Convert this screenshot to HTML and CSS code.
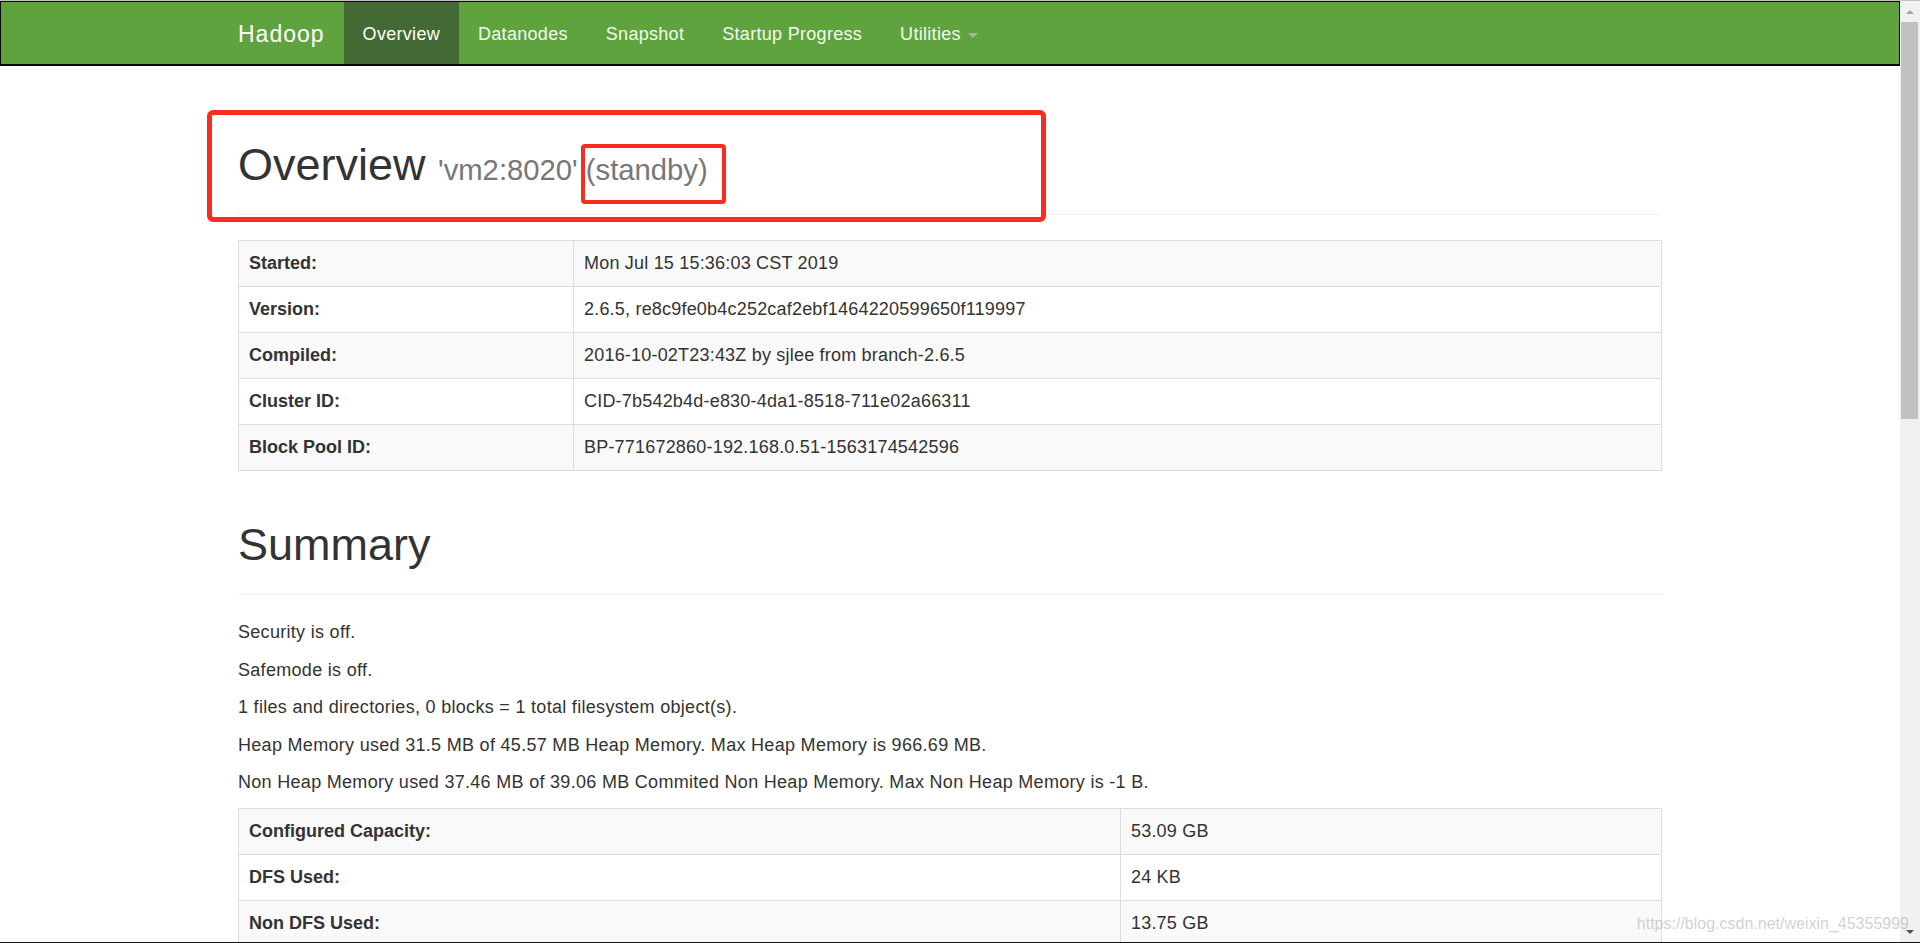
FILE: index.html
```html
<!DOCTYPE html>
<html lang="en">
<head>
<meta charset="utf-8">
<title>Namenode information</title>
<link rel="stylesheet" href="styles.css">
</head>
<body>
<div class="topline"></div>
<div class="window">
  <div class="page">
    <header class="navbar">
      <div class="container nav-inner">
        <a class="brand">Hadoop</a>
        <ul class="nav">
          <li class="active"><a>Overview</a></li>
          <li><a>Datanodes</a></li>
          <li><a>Snapshot</a></li>
          <li><a>Startup Progress</a></li>
          <li><a>Utilities <span class="caret"></span></a></li>
        </ul>
      </div>
    </header>

    <div class="container main">
      <div class="page-header">
        <h1>Overview <small>'vm2:8020' (standby)</small></h1>
      </div>

      <table class="table info">
        <colgroup><col class="key"><col></colgroup>
        <tr><th>Started:</th><td>Mon Jul 15 15:36:03 CST 2019</td></tr>
        <tr><th>Version:</th><td>2.6.5, re8c9fe0b4c252caf2ebf1464220599650f119997</td></tr>
        <tr><th>Compiled:</th><td>2016-10-02T23:43Z by sjlee from branch-2.6.5</td></tr>
        <tr><th>Cluster ID:</th><td>CID-7b542b4d-e830-4da1-8518-711e02a66311</td></tr>
        <tr><th>Block Pool ID:</th><td>BP-771672860-192.168.0.51-1563174542596</td></tr>
      </table>

      <div class="page-header">
        <h1>Summary</h1>
      </div>

      <p>Security is off.</p>
      <p>Safemode is off.</p>
      <p>1 files and directories, 0 blocks = 1 total filesystem object(s).</p>
      <p>Heap Memory used 31.5 MB of 45.57 MB Heap Memory. Max Heap Memory is 966.69 MB.</p>
      <p>Non Heap Memory used 37.46 MB of 39.06 MB Commited Non Heap Memory. Max Non Heap Memory is -1 B.</p>

      <table class="table capacity">
        <colgroup><col class="key"><col></colgroup>
        <tr><th>Configured Capacity:</th><td>53.09 GB</td></tr>
        <tr><th>DFS Used:</th><td>24 KB</td></tr>
        <tr><th>Non DFS Used:</th><td>13.75 GB</td></tr>
        <tr><th>DFS Remaining:</th><td>39.34 GB</td></tr>
        <tr><th>DFS Used%:</th><td>0%</td></tr>
      </table>
    </div>

    <div class="mark mark-big"></div>
    <div class="mark mark-small"></div>
  </div>

  <div class="scrollbar">
    <div class="sb-btn"><span class="arrow-up"></span></div>
    <div class="sb-thumb"></div>
    <div class="sb-fill"></div>
    <div class="sb-btn"><span class="arrow-down"></span></div>
  </div>

  <div class="watermark">https://blog.csdn.net/weixin_45355999</div>
</div>
<div class="bottomline"></div>
</body>
</html>
```

FILE: styles.css
```css
* { box-sizing: border-box; }

html, body {
  margin: 0;
  padding: 0;
}

body {
  width: 1920px;
  height: 943px;
  overflow: hidden;
  background: #fff;
  font-family: "Liberation Sans", Arial, sans-serif;
  font-size: 18px;
  line-height: 25px;
  color: #333;
}

.topline {
  height: 1px;
  background: #c4c4c4;
}

.bottomline {
  height: 1px;
  background: #111;
}

.window {
  position: relative;
  display: flex;
  height: 941px;
}

.page {
  position: relative;
  width: 1900px;
  height: 941px;
  overflow: hidden;
  background: #fff;
}

/* navbar */
.navbar {
  height: 65px;
  margin-bottom: 25px;
  background: #5fa33e;
  border: 1px solid #080808;
  border-bottom-width: 2px;
}

.container {
  width: 1424px;
  margin: 0 auto;
}

.nav-inner {
  display: flex;
  height: 62px;
}

.brand {
  padding: 20px 19px 17px 0;
  font-size: 23px;
  line-height: 25px;
  letter-spacing: 1px;
  color: #fff;
}

.nav {
  display: flex;
  margin: 0;
  padding: 0;
  list-style: none;
}

.nav a {
  display: block;
  height: 62px;
  padding: 20px 19px 17px;
  font-size: 18px;
  line-height: 25px;
  letter-spacing: .3px;
  color: #f4f8f2;
}

.nav .active a {
  background: #436a34;
  color: #fff;
}

.caret {
  display: inline-block;
  width: 0;
  height: 0;
  margin-left: 2px;
  vertical-align: middle;
  border-top: 5px solid #a8b2a3;
  border-left: 5px solid transparent;
  border-right: 5px solid transparent;
}

/* content */
.main {
  display: flow-root;
}

.page-header {
  margin: 49px 0 25px;
  padding-bottom: 11px;
  border-bottom: 1px solid #eee;
}

h1 {
  margin: 0 0 13px;
  font-size: 45px;
  line-height: 50px;
  font-weight: normal;
  color: #333;
}

h1 small {
  font-size: 29.25px;
  line-height: 1;
  font-weight: normal;
  color: #777;
}

p {
  margin: 0 0 12.5px;
  letter-spacing: .3px;
}

.table {
  width: 100%;
  margin-bottom: 25px;
  border-collapse: collapse;
  table-layout: fixed;
}

.table th,
.table td {
  padding: 10px;
  border: 1px solid #ddd;
  text-align: left;
  vertical-align: top;
  line-height: 25px;
}

.table td {
  letter-spacing: .2px;
}

.table th {
  font-weight: bold;
}

.table tr:nth-child(odd) {
  background: #f9f9f9;
}

.info col.key { width: 335px; }
.capacity col.key { width: 882px; }

/* annotation boxes */
.mark {
  position: absolute;
  border: 5px solid #fd2a1f;
  border-radius: 6px;
}

.mark-big {
  left: 207px;
  top: 109px;
  width: 839px;
  height: 112px;
}

.mark-small {
  left: 581px;
  top: 143px;
  width: 145px;
  height: 60px;
  border-width: 4px;
  border-radius: 4px;
}

/* scrollbar */
.scrollbar {
  width: 20px;
  display: flex;
  flex-direction: column;
  background: #f1f1f1;
}

.sb-btn {
  height: 21px;
  display: flex;
  align-items: center;
  justify-content: center;
}

.arrow-up {
  width: 0;
  height: 0;
  border-left: 4px solid transparent;
  border-right: 4px solid transparent;
  border-bottom: 4px solid #a3a3a3;
}

.arrow-down {
  width: 0;
  height: 0;
  border-left: 4px solid transparent;
  border-right: 4px solid transparent;
  border-top: 4px solid #505050;
}

.sb-thumb {
  width: 17px;
  height: 397px;
  margin-left: 1px;
  background: #c1c1c1;
}

.sb-fill {
  flex: 1;
}

.watermark {
  position: absolute;
  right: 11px;
  top: 914px;
  font-size: 16px;
  line-height: 18px;
  color: rgba(170, 170, 170, .55);
  white-space: nowrap;
}
```
